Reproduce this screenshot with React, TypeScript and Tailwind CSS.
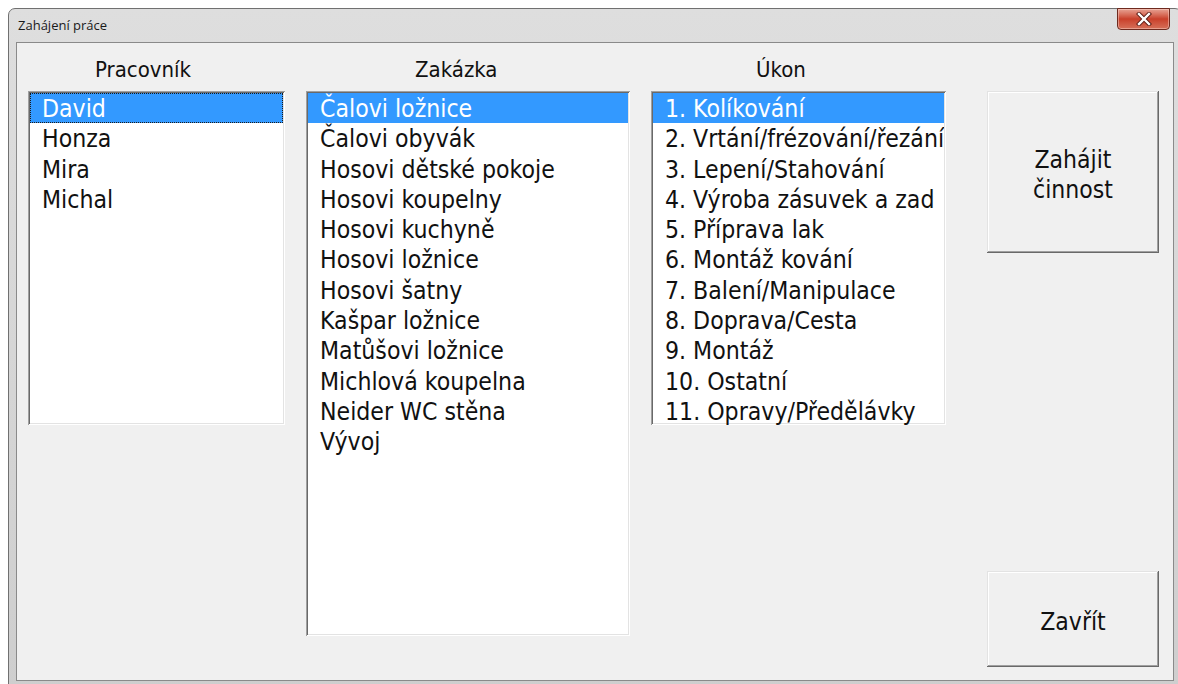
import React from "react";

const workers = ["David", "Honza", "Mira", "Michal"];
const orders = [
  "Čalovi ložnice",
  "Čalovi obyvák",
  "Hosovi dětské pokoje",
  "Hosovi koupelny",
  "Hosovi kuchyně",
  "Hosovi ložnice",
  "Hosovi šatny",
  "Kašpar ložnice",
  "Matůšovi ložnice",
  "Michlová koupelna",
  "Neider WC stěna",
  "Vývoj",
];
const tasks = [
  "1. Kolíkování",
  "2. Vrtání/frézování/řezání",
  "3. Lepení/Stahování",
  "4. Výroba zásuvek a zad",
  "5. Příprava lak",
  "6. Montáž kování",
  "7. Balení/Manipulace",
  "8. Doprava/Cesta",
  "9. Montáž",
  "10. Ostatní",
  "11. Opravy/Předělávky",
];

function ListBox({
  items,
  focused,
  className,
}: {
  items: string[];
  focused?: boolean;
  className: string;
}) {
  return (
    <div
      className={
        "bg-white p-[2px] overflow-hidden text-[24.6px] shadow-[inset_1px_1px_#a0a0a0,inset_-1px_-1px_#ffffff,inset_2px_2px_#696969,inset_-2px_-2px_#e3e3e3] " +
        className
      }
    >
      {items.map((it, i) => (
        <div
          key={it}
          className={
            "h-[30.3px] leading-[30.3px] pl-[12px] whitespace-nowrap overflow-hidden " +
            (i === 0
              ? "bg-[#3399ff] text-white" +
                (focused ? " outline outline-1 outline-dotted outline-[#1a1a1a] -outline-offset-1" : "")
              : "text-[#111]")
          }
        >
          <span className="relative top-[1px]">{it}</span>
        </div>
      ))}
    </div>
  );
}

function Button({ label, className }: { label: React.ReactNode; className: string }) {
  return (
    <div
      className={
        "flex items-center justify-center text-center leading-[30px] text-[#111] bg-[#f0f0f0] shadow-[inset_-1px_-1px_#696969,inset_1px_1px_#e3e3e3,inset_-2px_-2px_#a0a0a0,inset_2px_2px_#ffffff] " +
        className
      }
    >
      <div className="relative top-[3px]">{label}</div>
    </div>
  );
}

export default function App() {
  return (
    <div className="w-[1178px] h-[684px] bg-white overflow-hidden pl-[8px] pt-[8px]">
      <div className="w-[1174px] h-[684px] rounded-t-[7px] border border-[#707070] bg-gradient-to-b from-[#dedede] to-[#cecece] flex flex-col">
        {/* title bar */}
        <div className="h-[33px] flex items-start pl-[9px]">
          <div className="pt-[8px] text-[13px] leading-[16px] text-[#1a1a1a] font-['Open_Sans','Noto_Sans',sans-serif]">
            Zahájení práce
          </div>
          <div className="ml-auto mr-[11px] -mt-[1px] w-[53px] h-[22px] rounded-b-[4px] border border-[#6e2a1f] bg-gradient-to-b from-[#e6a294] via-[#c93f2a] to-[#d66f58] flex items-center justify-center shadow-[inset_0_0_0_1px_rgba(255,220,210,0.45)]">
            <svg width="16" height="14" viewBox="0 0 16 14">
              <path d="M3 2 L13 12 M13 2 L3 12" stroke="#5a1a12" strokeWidth="4.2" strokeLinecap="square" />
              <path d="M3 2 L13 12 M13 2 L3 12" stroke="#ffffff" strokeWidth="2.4" strokeLinecap="square" />
            </svg>
          </div>
        </div>

        {/* client area */}
        <div className="ml-[7px] w-[1158px] h-[639px] border border-[#8a8a8a] bg-[#f0f0f0] flex pl-[11px] text-[24px] font-['DejaVu_Sans_Condensed','DejaVu_Sans',sans-serif] font-stretch-condensed">
          <div className="w-[257px] pt-[12px] flex flex-col">
            <div className="h-[30px] leading-[30px] mb-[6px] pl-[67px] text-[22px] text-[#111]">Pracovník</div>
            <ListBox items={workers} focused className="h-[334px]" />
          </div>
          <div className="w-[324px] ml-[21px] pt-[12px] flex flex-col">
            <div className="h-[30px] leading-[30px] mb-[6px] pl-[109px] text-[22px] text-[#111]">Zakázka</div>
            <ListBox items={orders} className="h-[545px]" />
          </div>
          <div className="w-[295px] ml-[21px] pt-[12px] flex flex-col">
            <div className="h-[30px] leading-[30px] mb-[6px] pl-[105px] text-[22px] text-[#111]">Úkon</div>
            <ListBox items={tasks} className="h-[334px]" />
          </div>
          <div className="w-[172px] ml-[41px] pt-[48px] pb-[13px] flex flex-col justify-between text-[24.5px]">
            <Button
              className="h-[162px]"
              label={
                <>
                  Zahájit
                  <br />
                  činnost
                </>
              }
            />
            <Button className="h-[96px]" label="Zavřít" />
          </div>
        </div>
      </div>
    </div>
  );
}
